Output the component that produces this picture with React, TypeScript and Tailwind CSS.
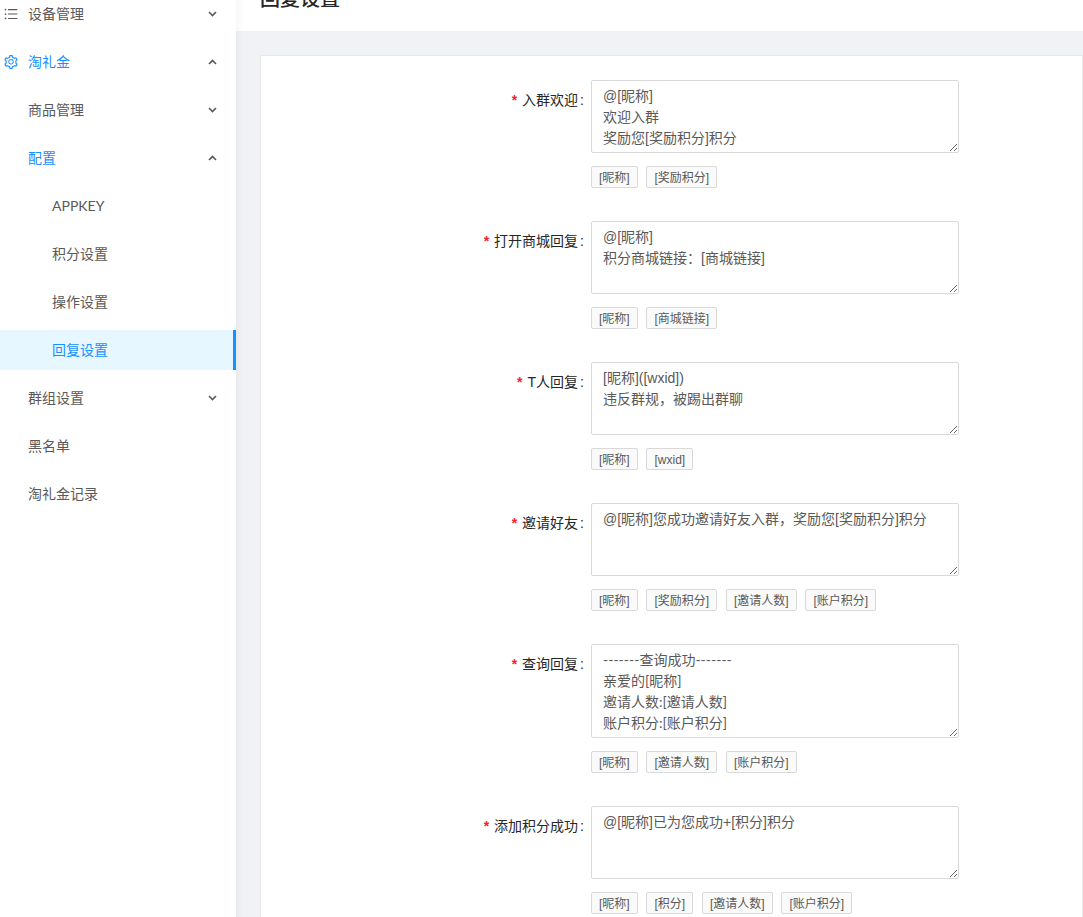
import { AiOutlineSetting, AiOutlineUnorderedList } from "react-icons/ai";

const FONT = "font-['Liberation_Sans','Noto_Sans_CJK_SC',sans-serif]";

interface ReplyField {
    label: string;
    value: string;
    tags: string[];
    tall?: boolean;
}

const FIELDS: ReplyField[] = [
    { label: "入群欢迎", value: "@[昵称]\n欢迎入群\n奖励您[奖励积分]积分", tags: ["[昵称]", "[奖励积分]"] },
    { label: "打开商城回复", value: "@[昵称]\n积分商城链接：[商城链接]", tags: ["[昵称]", "[商城链接]"] },
    { label: "T人回复", value: "[昵称]([wxid])\n违反群规，被踢出群聊", tags: ["[昵称]", "[wxid]"] },
    {
        label: "邀请好友",
        value: "@[昵称]您成功邀请好友入群，奖励您[奖励积分]积分",
        tags: ["[昵称]", "[奖励积分]", "[邀请人数]", "[账户积分]"],
    },
    {
        label: "查询回复",
        value: "-------查询成功-------\n亲爱的[昵称]\n邀请人数:[邀请人数]\n账户积分:[账户积分]",
        tags: ["[昵称]", "[邀请人数]", "[账户积分]"],
        tall: true,
    },
    {
        label: "添加积分成功",
        value: "@[昵称]已为您成功+[积分]积分",
        tags: ["[昵称]", "[积分]", "[邀请人数]", "[账户积分]"],
    },
];

function Arrow({ up }: { up?: boolean }) {
    return (
        <svg width="9" height="6" viewBox="0 0 9 6" fill="none" stroke="#595959" strokeWidth="1.600">
            <path d={up ? "M1 5L4.500 1.500L8 5" : "M1 1L4.500 4.500L8 1"} />
        </svg>
    );
}

function MenuRow({
    label,
    icon,
    arrow,
    active,
    indent = "pl-[28px]",
    latin,
}: {
    label: string;
    icon?: React.ReactNode;
    arrow?: "up" | "down";
    active?: boolean;
    indent?: string;
    latin?: boolean;
}) {
    return (
        <div
            className={`flex h-[40px] mb-[8px] items-center pr-[19px] text-[14px] ${icon ? "pl-[3px]" : indent} ${
                active ? "text-[#1890ff]" : "text-[#595959]"
            }`}
        >
            {icon}
            <span className={`flex-1 ${latin ? "font-['Lato',sans-serif] pb-[2px]" : ""}`}>{label}</span>
            {arrow === "down" && <Arrow />}
            {arrow === "up" && <Arrow up />}
        </div>
    );
}

function Sidebar() {
    return (
        <div className="w-[236px] h-[1000px] shrink-0 bg-white pt-[4px] -mt-[10px] shadow-[2px_0_8px_rgba(29,35,41,0.05)] z-10">
            <MenuRow label="设备管理" icon={<AiOutlineUnorderedList size={16} className="mr-[9px]" />} arrow="down" />
            <MenuRow label="淘礼金" icon={<AiOutlineSetting size={16} className="mr-[9px]" />} arrow="up" active />
            <MenuRow label="商品管理" arrow="down" />
            <MenuRow label="配置" arrow="up" active />
            <MenuRow label="APPKEY" indent="pl-[52px]" latin />
            <MenuRow label="积分设置" indent="pl-[52px]" />
            <MenuRow label="操作设置" indent="pl-[52px]" />
            <div className="flex h-[40px] mb-[8px] items-center pl-[52px] text-[14px] text-[#1890ff] bg-[#e6f7ff] border-r-[3px] border-[#1890ff]">
                回复设置
            </div>
            <MenuRow label="群组设置" arrow="down" />
            <MenuRow label="黑名单" />
            <MenuRow label="淘礼金记录" />
        </div>
    );
}

function FormRow({ field }: { field: ReplyField }) {
    return (
        <div className="flex mb-[33px]">
            <label className="w-[330px] shrink-0 h-[40px] flex items-center justify-end text-[14px] text-[#262626]">
                <span className="text-[#f5222d] mr-[5px] text-[14px] font-bold">*</span>
                {field.label}
                <span className="ml-[2px] mr-[7px]">:</span>
            </label>
            <div className="w-[368px]">
                <textarea
                    readOnly
                    value={field.value}
                    className={`block w-full rounded-[2px] border border-[#d9d9d9] px-[11px] text-[14px] leading-[21px] text-[#595959] outline-none ${
                        field.tall ? "h-[94px] py-[4px] font-['Lato','Noto_Sans_CJK_SC',sans-serif]" : "h-[73px] py-[5px]"
                    }`}
                />
                <div className="flex gap-[8.8px] mt-[13px]">
                    {field.tags.map((tag) => (
                        <span
                            key={tag}
                            className="h-[22px] px-[7px] pt-[2px] flex items-center rounded-[2px] border border-[#d9d9d9] bg-[#fafafa] text-[12px] text-[#595959]"
                        >
                            {tag}
                        </span>
                    ))}
                </div>
            </div>
        </div>
    );
}

export default function App() {
    return (
        <div className={`flex h-[917px] overflow-hidden bg-[#f0f2f5] ${FONT}`}>
            <Sidebar />
            <div className="flex-1 min-w-0">
                <div className="h-[31px] bg-white overflow-hidden">
                    <div className="pl-[24px] -mt-[15px] text-[20px] leading-[28px] font-medium text-[#262626]">回复设置</div>
                </div>
                <div className="pt-[24px] pl-[24px]">
                    <div className="bg-white border border-[#e8e8e8] pt-[24px] h-[900px]">
                        {FIELDS.map((field) => (
                            <FormRow key={field.label} field={field} />
                        ))}
                    </div>
                </div>
            </div>
        </div>
    );
}
